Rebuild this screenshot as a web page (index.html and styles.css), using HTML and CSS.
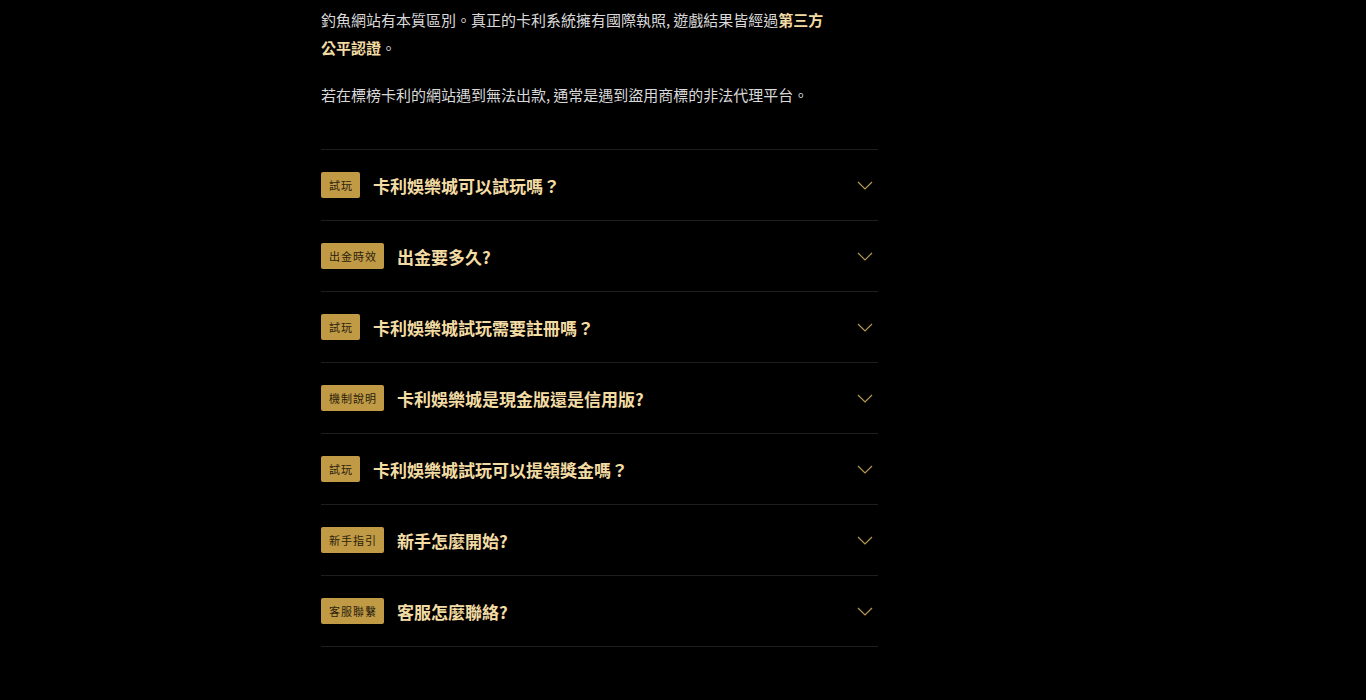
FILE: index.html
```html
<!DOCTYPE html>
<html lang="zh-Hant">
<head>
<meta charset="utf-8">
<title>卡利娛樂城 FAQ</title>
<link rel="stylesheet" href="styles.css">
</head>
<body>
<main class="page">
  <section class="content">
    <div class="intro">
      <p>釣魚網站有本質區別。真正的卡利系統擁有國際執照<span class="comma">,</span>遊戲結果皆經過<strong>第三方公平認證</strong>。</p>
      <p>若在標榜卡利的網站遇到無法出款<span class="comma">,</span>通常是遇到盜用商標的非法代理平台。</p>
    </div>
    <ul class="faq">
      <li class="faq-item"><span class="tag">試玩</span><span class="q">卡利娛樂城可以試玩嗎？</span><svg class="chev" viewBox="0 0 16 9" width="16" height="9"><polyline points="1,1 8,8 15,1"/></svg></li>
      <li class="faq-item"><span class="tag">出金時效</span><span class="q">出金要多久?</span><svg class="chev" viewBox="0 0 16 9" width="16" height="9"><polyline points="1,1 8,8 15,1"/></svg></li>
      <li class="faq-item"><span class="tag">試玩</span><span class="q">卡利娛樂城試玩需要註冊嗎？</span><svg class="chev" viewBox="0 0 16 9" width="16" height="9"><polyline points="1,1 8,8 15,1"/></svg></li>
      <li class="faq-item"><span class="tag">機制說明</span><span class="q">卡利娛樂城是現金版還是信用版?</span><svg class="chev" viewBox="0 0 16 9" width="16" height="9"><polyline points="1,1 8,8 15,1"/></svg></li>
      <li class="faq-item"><span class="tag">試玩</span><span class="q">卡利娛樂城試玩可以提領獎金嗎？</span><svg class="chev" viewBox="0 0 16 9" width="16" height="9"><polyline points="1,1 8,8 15,1"/></svg></li>
      <li class="faq-item"><span class="tag">新手指引</span><span class="q">新手怎麼開始?</span><svg class="chev" viewBox="0 0 16 9" width="16" height="9"><polyline points="1,1 8,8 15,1"/></svg></li>
      <li class="faq-item"><span class="tag">客服聯繫</span><span class="q">客服怎麼聯絡?</span><svg class="chev" viewBox="0 0 16 9" width="16" height="9"><polyline points="1,1 8,8 15,1"/></svg></li>
    </ul>
  </section>
</main>
</body>
</html>
```

FILE: styles.css
```css
html, body {
  margin: 0;
  padding: 0;
  background: #000;
}
body {
  font-family: "Noto Sans CJK TC", "Noto Sans", sans-serif;
  color: #d9d9d9;
}
.page {
  padding: 6px 0 0 321px;
}
.content {
  width: 557px;
}
.intro {
  max-width: 510px;
}
.intro p {
  margin: 0 0 19px;
  font-size: 15px;
  line-height: 28px;
}
.comma {
  letter-spacing: 3px;
}
.intro strong {
  color: #f3dca4;
  font-weight: 700;
}
.faq {
  list-style: none;
  margin: 40px 0 0;
  padding: 0;
  border-top: 1px solid #1e1e1e;
}
.faq-item {
  display: flex;
  align-items: center;
  gap: 13px;
  height: 70px;
  border-bottom: 1px solid #1e1e1e;
}
.tag {
  display: inline-flex;
  align-items: center;
  height: 26px;
  padding: 0 7px 0 8px;
  background: #c19a46;
  color: #2b1f0c;
  font-size: 11px;
  letter-spacing: 1px;
  border-radius: 2px;
  line-height: 1;
}
.q {
  flex: 1;
  font-size: 17px;
  font-weight: 700;
  color: #f3dca4;
}
.chev {
  margin-right: 5px;
  fill: none;
  stroke: #b69853;
  stroke-width: 1.2;
}
```
